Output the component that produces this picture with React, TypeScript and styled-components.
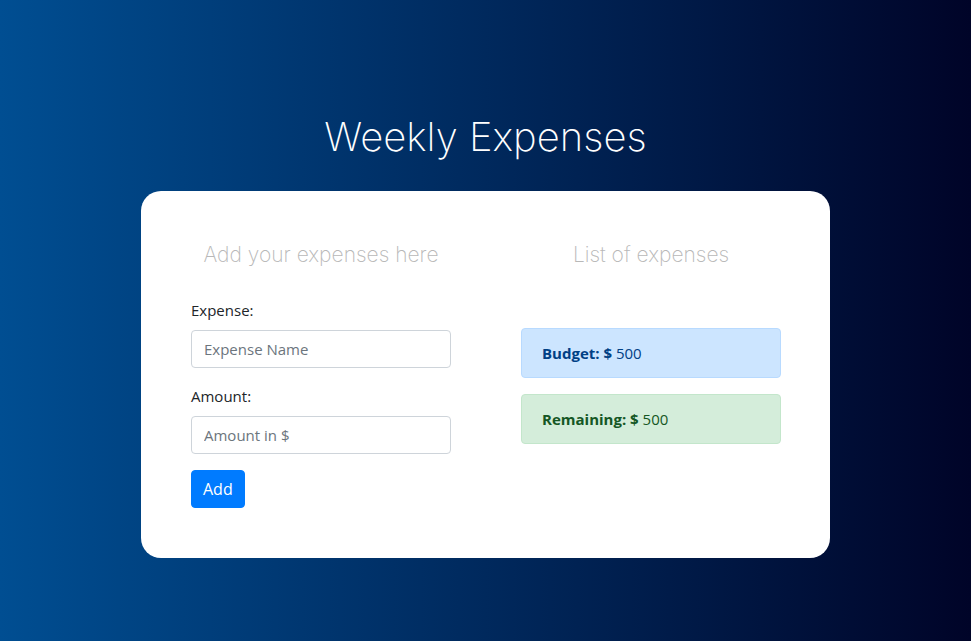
import React from "react";
import styled, { createGlobalStyle } from "styled-components";

const GlobalStyle = createGlobalStyle`
  html, body { margin: 0; padding: 0; }
  body {
    font-family: "Segoe UI", "Open Sans", "Noto Sans", sans-serif;
    color: #212529;
    background: linear-gradient(to right, #004e92, #000428);
    min-height: 641px;
  }
  * { box-sizing: border-box; }
`;

const Page = styled.main`
  min-height: 641px;
  display: flex;
  flex-direction: column;
  align-items: center;
  padding-top: 113px;
`;

const Title = styled.h1`
  margin: 0 0 30px;
  font-family: "Inter", sans-serif;
  font-weight: 150;
  font-size: 40px;
  line-height: 48px;
  color: #ffffff;
`;

const Card = styled.section`
  width: 689px;
  background: #ffffff;
  border-radius: 20px;
  padding: 50px 50px 50px;
  display: grid;
  grid-template-columns: 260px 260px;
  column-gap: 70px;
`;

const Column = styled.div`
  display: flex;
  flex-direction: column;
`;

const ColumnTitle = styled.h2<{ $gap: number }>`
  margin: 1px 0 ${(p) => p.$gap}px;
  text-align: center;
  font-family: "Inter", sans-serif;
  font-weight: 200;
  font-size: 21px;
  line-height: 26px;
  color: #b8b8b8;
`;

const Field = styled.div`
  display: flex;
  flex-direction: column;
  margin-bottom: 16px;
`;

const Label = styled.label`
  font-size: 15px;
  line-height: 24px;
  margin-bottom: 8px;
  color: #212529;
`;

const Input = styled.input`
  height: 38px;
  width: 100%;
  padding: 6px 12px;
  font-family: inherit;
  font-size: 15px;
  color: #495057;
  border: 1px solid #ced4da;
  border-radius: 4px;
  outline: none;
  &::placeholder { color: #6c757d; }
`;

const Button = styled.button`
  align-self: flex-start;
  height: 38px;
  padding: 0 11px;
  font-family: inherit;
  font-size: 16px;
  color: #ffffff;
  background: #007bff;
  border: 1px solid #007bff;
  border-radius: 4px;
  cursor: pointer;
`;

const Alert = styled.div<{ $variant: "primary" | "success" }>`
  height: 50px;
  padding: 12px 20px;
  margin-bottom: 16px;
  border-radius: 4px;
  font-size: 15px;
  line-height: 24px;
  border: 1px solid ${(p) => (p.$variant === "primary" ? "#b8daff" : "#c3e6cb")};
  background: ${(p) => (p.$variant === "primary" ? "#cce5ff" : "#d4edda")};
  color: ${(p) => (p.$variant === "primary" ? "#004085" : "#155724")};
  strong { font-weight: 700; }
`;

export default function App() {
  return (
    <>
      <GlobalStyle />
      <Page>
        <Title>Weekly Expenses</Title>
        <Card>
          <Column>
            <ColumnTitle $gap={30}>Add your expenses here</ColumnTitle>
            <Field>
              <Label>Expense:</Label>
              <Input placeholder="Expense Name" />
            </Field>
            <Field>
              <Label>Amount:</Label>
              <Input placeholder="Amount in $" />
            </Field>
            <Button>Add</Button>
          </Column>
          <Column>
            <ColumnTitle $gap={60}>List of expenses</ColumnTitle>
            <Alert $variant="primary">
              <strong>Budget: $</strong> 500
            </Alert>
            <Alert $variant="success">
              <strong>Remaining: $</strong> 500
            </Alert>
          </Column>
        </Card>
      </Page>
    </>
  );
}
